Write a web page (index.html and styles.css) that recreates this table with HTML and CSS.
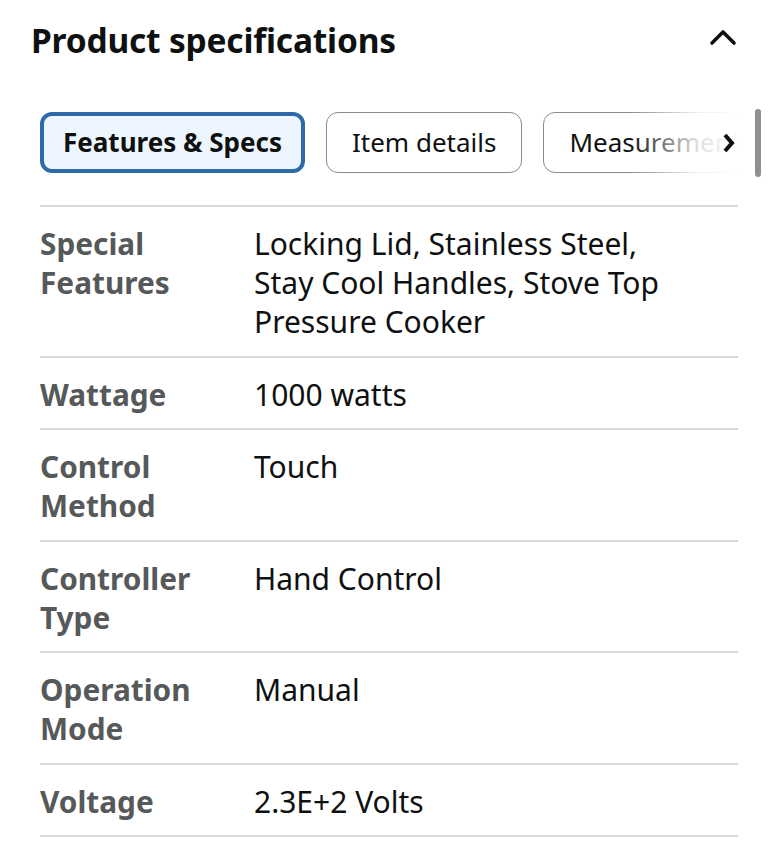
FILE: index.html
```html
<!DOCTYPE html>
<html>
<head>
<meta charset="utf-8">
<link rel="stylesheet" href="styles.css">
</head>
<body>
<div class="page">
  <div class="header">
    <h2 class="title">Product specifications</h2>
    <svg class="chev" width="30" height="20" viewBox="0 0 30 20"><path d="M4 16 L15 5 L26 16" fill="none" stroke="#0f1111" stroke-width="3.6" stroke-linecap="round" stroke-linejoin="round"/></svg>
  </div>
  <div class="tabs-wrap">
    <div class="tabs">
      <div class="tab active">Features &amp; Specs</div>
      <div class="tab">Item details</div>
      <div class="tab">Measurements</div>
    </div>
    <div class="fade"></div>
    <svg class="next" width="14" height="22" viewBox="0 0 14 22"><path d="M3 3 L10 11 L3 19" fill="none" stroke="#0f1111" stroke-width="4" stroke-linejoin="miter"/></svg>
    <div class="scroll-thumb"></div>
  </div>
  <div class="table">
    <div class="row"><div class="label">Special Features</div><div class="value">Locking Lid, Stainless Steel, Stay Cool Handles, Stove Top Pressure Cooker</div></div>
    <div class="row"><div class="label">Wattage</div><div class="value">1000 watts</div></div>
    <div class="row"><div class="label">Control Method</div><div class="value">Touch</div></div>
    <div class="row"><div class="label">Controller Type</div><div class="value">Hand Control</div></div>
    <div class="row"><div class="label">Operation Mode</div><div class="value">Manual</div></div>
    <div class="row"><div class="label">Voltage</div><div class="value">2.3E+2 Volts</div></div>
  </div>
</div>
</body>
</html>
```
FILE: styles.css
```css
html, body {
  margin: 0;
  padding: 0;
  background: #ffffff;
}
body {
  font-family: "Noto Sans", "Open Sans", sans-serif;
  color: #0f1111;
}
.page {
  width: 768px;
  height: 848px;
  overflow: hidden;
  position: relative;
}
.header {
  display: flex;
  align-items: center;
  justify-content: space-between;
  padding: 14px 30px 0 31px;
  height: 52px;
}
.title {
  margin: 0;
  font-size: 33.5px;
  font-weight: 700;
  letter-spacing: -0.2px;
  line-height: 52px;
}
.chev {
  display: block;
  margin-top: -6px;
}
.tabs-wrap {
  position: relative;
  margin: 45px 0 0 40px;
  width: 700px;
  height: 64px;
}
.tabs {
  display: flex;
  gap: 21px;
  overflow: hidden;
  width: 700px;
  height: 64px;
  padding-top: 1px;
  box-sizing: border-box;
}
.tab {
  flex: 0 0 auto;
  box-sizing: border-box;
  height: 61px;
  padding: 0 25px;
  border: 1.5px solid #888c8c;
  border-radius: 12px;
  font-size: 26px;
  line-height: 58px;
  white-space: nowrap;
  color: #0f1111;
  background: #fff;
}
.tab.active {
  border: 4px solid #2e6aa8;
  background: #edf6fe;
  font-weight: 700;
  line-height: 53px;
  padding: 0 19px;
}
.fade {
  position: absolute;
  top: 0;
  right: 0;
  width: 110px;
  height: 64px;
  background: linear-gradient(to right, rgba(255,255,255,0) 0%, rgba(255,255,255,0.85) 60%, #fff 100%);
}
.next {
  position: absolute;
  right: 4px;
  top: 21px;
}
.scroll-thumb {
  position: absolute;
  left: 715px;
  top: -2px;
  width: 6px;
  height: 68px;
  border-radius: 3px;
  background: #8f8f8f;
}
.table {
  margin: 30px 30px 0 40px;
  border-top: 2px solid #d5d9d9;
}
.row {
  display: flex;
  border-bottom: 2px solid #d5d9d9;
  padding: 17px 0 14.5px;
}
.label {
  width: 214px;
  flex: 0 0 214px;
  font-weight: 700;
  color: #565959;
  font-size: 29.8px;
  line-height: 39px;
  padding-right: 16px;
  box-sizing: border-box;
}
.value {
  flex: 1;
  font-size: 30px;
  line-height: 39px;
  color: #0f1111;
  padding-right: 56px;
}
```
